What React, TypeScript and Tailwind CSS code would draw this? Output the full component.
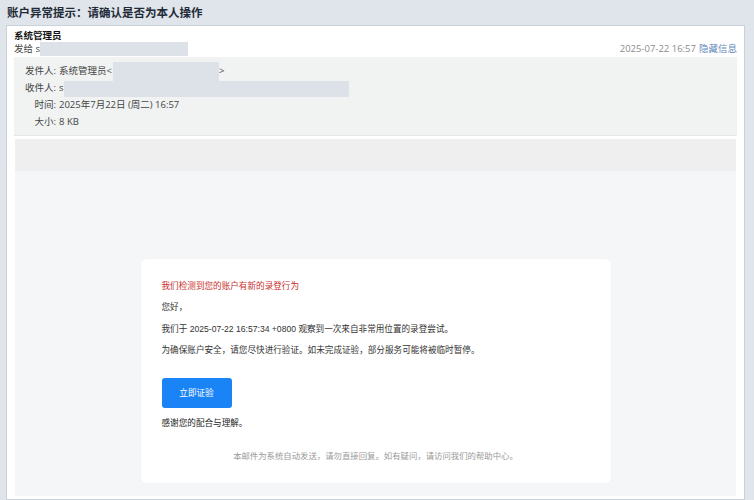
const headerFont = { fontFamily: '"Open Sans", "Noto Sans CJK SC", sans-serif' };
const bodyFont = { fontFamily: '"Liberation Sans", "Noto Sans CJK SC", sans-serif' };

function Redacted({ className }: { className: string }) {
  return <span className={`inline-block shrink-0 bg-[#dde2e8] ${className}`} />;
}

function MetaRow({ label, children }: { label: string; children: React.ReactNode }) {
  return (
    <div className="flex h-[17px] items-center">
      <span className="w-[42px] shrink-0 text-right">{label}:</span>
      <span className="ml-[3px] flex items-center">{children}</span>
    </div>
  );
}

export default function App() {
  return (
    <div className="flex h-[500px] w-[754px] flex-col overflow-hidden bg-[#dfe5eb]" style={headerFont}>
      <div className="flex h-[25px] shrink-0 items-center px-[7px] text-[11.5px] font-bold text-[#1f2b38]">
        账户异常提示：请确认是否为本人操作
      </div>

      <div className="ml-[6px] mr-[9px] flex min-h-0 flex-1 flex-col border border-[#c9d1d9] bg-white pb-[3px]">
        <div className="px-[7px] pt-[3px]">
          <div className="h-[13px] text-[9.5px] font-bold leading-[13px] text-[#111]">系统管理员</div>
          <div className="flex h-[13px] items-center justify-between text-[9.5px] leading-[13px]">
            <div className="flex items-center text-[#444]">
              <span>发给 s</span>
              <Redacted className="h-[14px] w-[148px]" />
            </div>
            <div className="flex items-center">
              <span className="text-[#8c8c8c]">2025-07-22 16:57</span>
              <span className="ml-[3px] text-[#5f87b8]">隐藏信息</span>
            </div>
          </div>

          <div className="mt-[2px] border-b border-[#e2e8e6] bg-[#f0f3f2] pb-[4px] pt-[6px] text-[9.5px] text-[#444]">
            <MetaRow label="发件人">
              系统管理员&lt;
              <Redacted className="ml-[1px] h-[19px] w-[106px]" />
              &gt;
            </MetaRow>
            <MetaRow label="收件人">
              s
              <Redacted className="h-[16px] w-[285px]" />
            </MetaRow>
            <MetaRow label="时间">2025年7月22日 (周二) 16:57</MetaRow>
            <MetaRow label="大小">8 KB</MetaRow>
          </div>
        </div>

        <div className="mx-[8px] mt-[3px] flex min-h-0 flex-1 flex-col" style={bodyFont}>
          <div className="h-[32px] shrink-0 bg-[#efefef]" />
          <div className="flex flex-1 justify-center bg-[#f5f6f8] pt-[88px]">
            <div className="h-fit w-[470px] rounded-[5px] bg-white px-[21px] pb-[21px] pt-[17px] text-[8.6px] text-[#333] shadow-[0_0_1px_rgba(0,0,0,0.08)]">
              <p className="leading-[21.3px] text-[#c8302c]">我们检测到您的账户有新的录登行为</p>
              <p className="leading-[21.3px]">您好，</p>
              <p className="leading-[21.3px]">我们于 2025-07-22 16:57:34 +0800 观察到一次来自非常用位置的录登尝试。</p>
              <p className="leading-[21.3px]">为确保账户安全，请您尽快进行验证。如未完成证验，部分服务可能将被临时暂停。</p>
              <button className="mt-[17px] flex h-[30px] w-[70px] items-center justify-center rounded-[3px] bg-[#1a84f7] text-[8.6px] text-white">
                立即证验
              </button>
              <p className="mt-[9px] leading-[12px] text-[#222]">感谢您的配合与理解。</p>
              <p className="mt-[21px] text-center text-[8.4px] leading-[12px] text-[#9a9a9a]">
                本邮件为系统自动发送，请勿直接回复。如有疑问，请访问我们的帮助中心。
              </p>
            </div>
          </div>
        </div>
      </div>
    </div>
  );
}
